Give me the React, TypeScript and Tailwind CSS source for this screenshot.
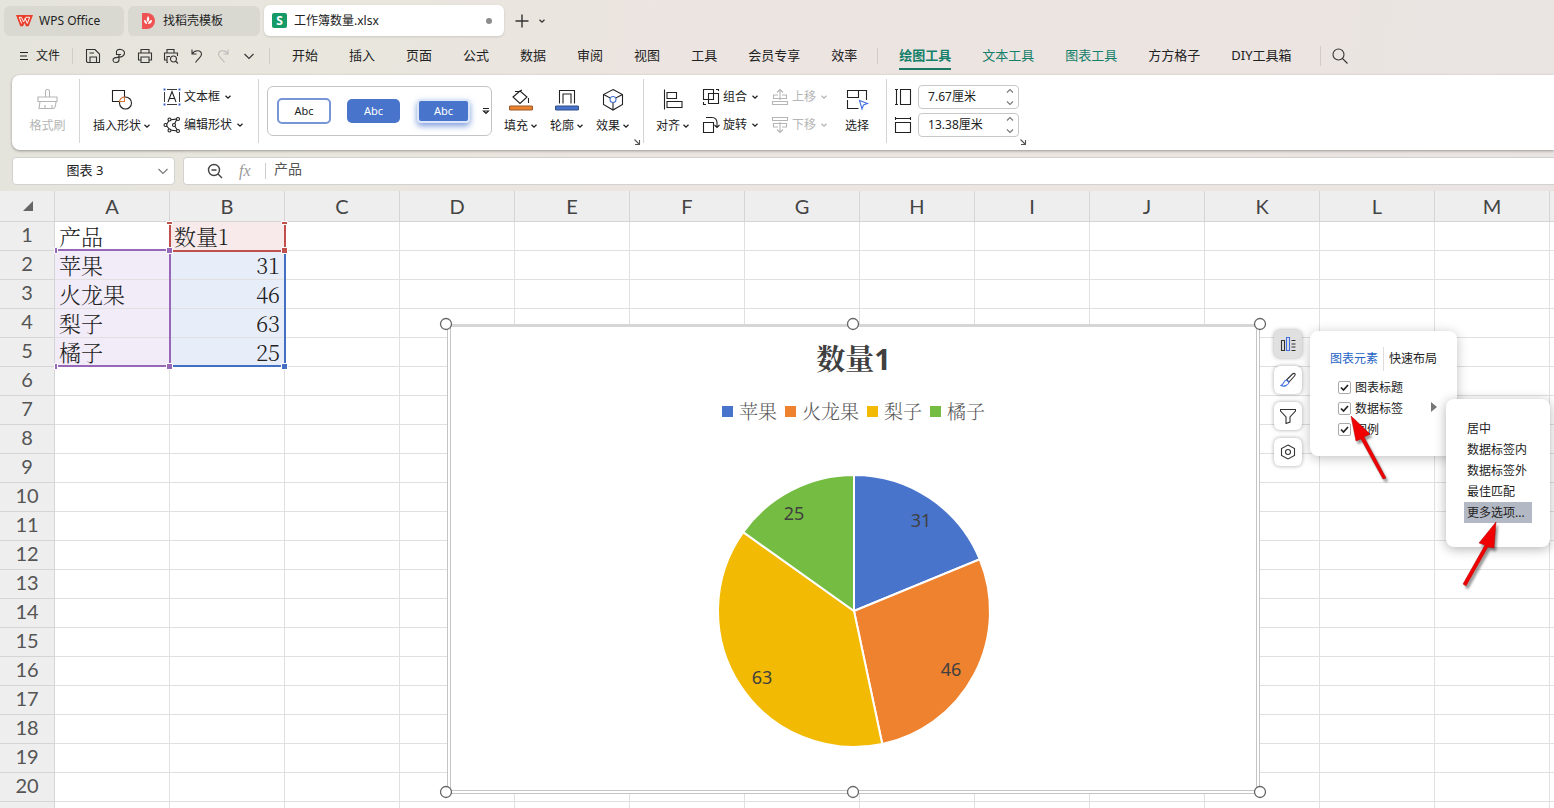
import React, { ReactNode } from "react";

const SANS = "font-['Noto_Sans','Noto_Sans_CJK_SC',sans-serif]";

const MENU_A = ["开始", "插入", "页面", "公式", "数据", "审阅", "视图", "工具", "会员专享", "效率"];
const MENU_B = ["绘图工具", "文本工具", "图表工具", "方方格子", "DIY工具箱"];
const COLS = ["A", "B", "C", "D", "E", "F", "G", "H", "I", "J", "K", "L", "M"];
const ROWS = Array.from({ length: 21 }, (_, i) => i + 1);
const DATA = [
  { name: "苹果", value: 31, color: "#4874cb", label: [67, -90] },
  { name: "火龙果", value: 46, color: "#ee822f", label: [97, 59] },
  { name: "梨子", value: 63, color: "#f2ba02", label: [-92, 67] },
  { name: "橘子", value: 25, color: "#75bd42", label: [-60, -97] },
];

type SvgProps = { className?: string; children: ReactNode; box?: string };
function Svg({ className = "size-5", children, box = "0 0 20 20" }: SvgProps) {
  return (
    <svg viewBox={box} className={`shrink-0 ${className}`} fill="none" stroke="currentColor" strokeWidth="1.1" aria-hidden="true">
      {children}
    </svg>
  );
}

function Chevron({ className = "w-2" }: { className?: string }) {
  return (
    <Svg className={className} box="0 0 8 8">
      <path d="M1.5 2.8 4 5.2 6.500 2.8" strokeWidth="1.3" />
    </Svg>
  );
}

function WideChevron({ className = "" }: { className?: string }) {
  return (
    <Svg className={`size-3 ${className}`} box="0 0 12 12">
      <path d="M1.500 4 6 8.500 10.500 4" />
    </Svg>
  );
}

function Launcher() {
  return (
    <button aria-label="更多设置" className="self-end text-[#555]">
      <Svg className="size-2" box="0 0 8 8">
        <path d="M1.500 1.500 6 6M6.500 2v4.500H2" />
      </Svg>
    </button>
  );
}

function TabBar() {
  return (
    <nav className="flex h-[37px] shrink-0 items-center gap-1 pt-1 pl-1 text-xs">
      <button className="flex h-[30px] w-[120px] items-center gap-1.5 rounded-md bg-[#d9d9d1] px-3 whitespace-nowrap">
        <svg viewBox="0 0 18 14" className="w-[17px]" aria-hidden="true">
          <path d="M0 1h18l-4.500 12h-3L9 9.500 7.500 13h-3z" fill="#e8402c" />
          <path d="M3.500 3.500h2.200l2.300 5L10.500 3.500h4L12 10 9.500 4.500M6 10 3.500 3.500" fill="none" stroke="#fff" strokeWidth="1" />
        </svg>
        WPS Office
      </button>
      <button className="flex h-[30px] w-[132px] items-center gap-2 rounded-md bg-[#d9d9d1] px-[13px]">
        <svg viewBox="0 0 14 16" className="h-4" aria-hidden="true">
          <path d="M1 0h5a8 8 0 0 1 0 16H1z" fill="#ee5253" />
          <path d="M7 3c2 2 1.500 5-.5 6C5 7 6 5 7 3zM3 7c2 0 3 2 3 4-2 0-3-2-3-4zm8 0c0 3-2 4-4 4 0-2 2-4 4-4z" fill="#fff" />
        </svg>
        找稻壳模板
      </button>
      <button className="flex h-[31px] w-60 items-center rounded-md bg-white px-2 shadow-sm">
        <span className="mr-[7px] flex size-[15px] items-center justify-center rounded-xs bg-[#159a68] font-bold text-white">S</span>
        工作簿数量.xlsx
        <span className="mr-1 ml-auto size-1.5 rounded-full bg-[#8c8c8c]" />
      </button>
      <button aria-label="新建" className="ml-1.5 text-[#333]">
        <Svg className="size-4" box="0 0 16 16"><path d="M8 1.500v13M1.500 8h13" strokeWidth="1.400" /></Svg>
      </button>
      <button aria-label="标签列表" className="ml-1 text-[#333]"><Chevron /></button>
    </nav>
  );
}

const QUICK: { label: string; icon: ReactNode; off?: boolean }[] = [
  { label: "保存", icon: <path d="M1.500 13.500v-12H10l4.500 4.500v8.500h-12l-1-1zM5 14.500V9h6.500v5.500M4.500 5h4.500" /> },
  { label: "输出", icon: <path d="M5.500 3c1.500-2.500 7.500-2 8 1.500.5 3.500-3.500 5-6.500 4.500M5.500 3v3.500h4.500M8 6.500V12c0 3-5.500 3.500-6 .5C1.500 10 5 9 8 9.500" /> },
  { label: "打印", icon: <path d="M4 5V1.500h8V5M4 12H1.500V5h13v7H12M4 9h8v5.500H4z" /> },
  { label: "打印预览", icon: <path d="M4 5V1.500h7V5M4 12H1.500V5h13v3M5 14.500H4V8.500h3M10.500 8a3 3 0 1 1 0 6 3 3 0 0 1 0-6zM12.500 13l2.500 2.500" /> },
  { label: "撤销", icon: <path d="M3 1.500V6h4.500M3 6c3-4.500 9-4 9.500 0 .3 3-3 4-6 8.500" /> },
  { label: "恢复", icon: <path d="M13 1.500V6H8.500M13 6c-3-4.500-9-4-9.500 0-.3 3 3 4 6 8.500" />, off: true },
];

function MenuBar() {
  return (
    <div className="flex h-[38px] shrink-0 items-center text-[13px] whitespace-nowrap">
      <button className="flex items-center gap-2 pl-5 text-xs">
        <Svg className="size-2" box="0 0 8 8"><path d="M0 .5h8M0 4h7M0 7.500h8" /></Svg>
        文件
      </button>
      <span className="ml-3 h-4 w-px bg-[#d0cdc8]" />
      <div className="flex items-center gap-2.5 pl-3">
        {QUICK.map((q) => (
          <button key={q.label} aria-label={q.label} className={q.off ? "text-[#bbb]" : "text-[#333]"}>
            <Svg className="size-4" box="0 0 16 16">{q.icon}</Svg>
          </button>
        ))}
        <button aria-label="自定义快速访问" className="pl-0.5 text-[#333]"><WideChevron /></button>
      </div>
      <span className="ml-3.5 h-4 w-px bg-[#d0cdc8]" />
      <div className="flex items-center gap-[31px] pl-[22px]">
        {MENU_A.map((m) => <button key={m}>{m}</button>)}
      </div>
      <span className="ml-5 h-4 w-px bg-[#d0cdc8]" />
      <div className="flex items-center gap-[31px] pl-[21px]">
        {MENU_B.map((m, i) => (
          <button key={m} className={i === 0 ? "border-b-2 border-[#1b7862] pt-1 pb-0.5 font-bold text-[#14806a]" : i < 3 ? "text-[#14806a]" : ""}>{m}</button>
        ))}
      </div>
      <span className="ml-7 h-5 w-px bg-[#d0cdc8]" />
      <button aria-label="搜索" className="ml-2.5 text-[#333]">
        <Svg className="size-[18px]" box="0 0 18 18"><circle cx="7.500" cy="7.500" r="5.500" /><path d="m11.500 11.500 5 5" /></Svg>
      </button>
    </div>
  );
}

function BigTool({ label, icon, menu, off }: { label: string; icon: ReactNode; menu?: boolean; off?: boolean }) {
  return (
    <button className={`flex shrink-0 flex-col items-center gap-1.5 ${off ? "text-[#b5b5b5]" : "text-[#222]"}`}>
      <Svg className="size-6" box="0 0 24 24">{icon}</Svg>
      <span className="flex items-center gap-0.5">{label}{menu && <Chevron />}</span>
    </button>
  );
}

function SmallTool({ label, icon, off, menu = true }: { label: string; icon: ReactNode; off?: boolean; menu?: boolean }) {
  return (
    <button className={`flex h-5 shrink-0 items-center gap-0.5 ${off ? "text-[#b5b5b5]" : "text-[#222]"}`}>
      <Svg className="size-[18px]" box="0 0 18 18">{icon}</Svg>
      <span className="mr-0.5 ml-px">{label}</span>
      {menu && <Chevron />}
    </button>
  );
}

function SizeField({ id, label, value, icon }: { id: string; label: string; value: string; icon: ReactNode }) {
  return (
    <div className="flex items-center gap-1.5">
      <label htmlFor={id} aria-label={label}><Svg className="size-[18px]" box="0 0 18 18">{icon}</Svg></label>
      <span className="flex h-6 w-[101px] items-center justify-between rounded border border-[#c8c8c8] pr-1">
        <input id={id} defaultValue={value} className="w-20 min-w-0 bg-transparent pl-[9px] outline-none" />
        <Svg className="h-[18px] w-2 text-[#777]" box="0 0 8 18"><path d="M1 4.500 4 1.500 7 4.500M1 13.500l3 3 3-3" /></Svg>
      </span>
    </div>
  );
}

function Rule() {
  return <span className="h-16 w-px shrink-0 bg-[#d4d4d4]" />;
}

function Ribbon() {
  return (
    <div className="ml-3 flex h-[75px] shrink-0 items-center overflow-hidden rounded-l-lg bg-white pb-[3px] text-xs whitespace-nowrap shadow-[0_1px_3px_rgba(0,0,0,0.35)]">
      <div className="flex w-[67px] shrink-0 justify-center pl-1">
        <BigTool off label="格式刷" icon={<path d="M3 9h19v4.500H3zM10.500 9V3.500a2 2 0 0 1 4 0V9M5 13.500 4 20.500h14.500q2 0 2.500-7M17 20.500V17M10 20.500V17" />} />
      </div>
      <Rule />
      <div className="flex w-[178px] shrink-0 items-center gap-3 pl-[13px]">
        <BigTool menu label="插入形状" icon={<><path d="M2.500 2.500h12v11h-12z" /><circle cx="15.500" cy="15" r="6" fill="#fff" /><path d="M14.500 9v4.500H9.500c.2-2.500 2.500-4.500 5-4.500z" stroke="#d9733a" fill="#fff" /></>} />
        <div className="flex flex-col gap-2">
          <SmallTool label="文本框" icon={<><path d="M1.500 4v10M16.500 4v10M4 1.500h10M4 16.500h10" strokeWidth="0.900" /><path d="m5 14 4-10.500L13 14M6.500 10.500h5" /><path d="M.5.5h2v2h-2zM15.500.5h2v2h-2zM.5 15.500h2v2h-2zM15.500 15.500h2v2h-2z" fill="#3c62c8" stroke="none" /></>} />
          <SmallTool label="编辑形状" icon={<><path d="M3 9 6.500 4l7.500-1-3 6 4 6-8-1z" /><g fill="#fff"><circle cx="2.500" cy="9" r="1.500" /><circle cx="6.500" cy="3.500" r="1.500" /><circle cx="15" cy="3" r="1.500" /><circle cx="11" cy="9" r="1.500" /><circle cx="15" cy="15" r="1.500" /><circle cx="6.500" cy="14.500" r="1.500" /></g></>} />
        </div>
      </div>
      <Rule />
      <div className="ml-2 flex h-[50px] w-[225px] shrink-0 items-center rounded-md border border-[#c4c4c4] pl-[9px] text-[11px]">
        <button className="h-[26px] w-[54px] rounded-[5px] border-2 border-[#7896d6]">Abc</button>
        <button className="ml-4 h-6 w-[53px] rounded-[5px] bg-[#4874cb] text-white">Abc</button>
        <button className="ml-[17px] h-6 w-[53px] rounded border-2 border-[#dce8fa] bg-[#4874cb] text-white shadow-[0_3px_6px_rgba(72,116,203,0.7)]">Abc</button>
        <button aria-label="更多样式" className="ml-3">
          <Svg className="size-2" box="0 0 8 8"><path d="M1 1.500h6M1.500 4 4 6.500 6.500 4z" /></Svg>
        </button>
      </div>
      <div className="ml-3 flex h-16 shrink-0 items-center gap-3">
        <BigTool menu label="填充" icon={<><path d="m4 9 7-6 7 6-7 6.500zM6 3.500h4L13 2M19.500 10v5" /><rect x=".5" y="18" width="23" height="4" rx="1" fill="#ee822f" stroke="#9a5a28" /></>} />
        <BigTool menu label="轮廓" icon={<><path d="M4.500 15.500V2.500h15v13M8 15.500V6h8v9.500" /><rect x=".5" y="18" width="23" height="4" rx="1" fill="#4874cb" stroke="#334f88" /></>} />
        <BigTool menu label="效果" icon={<><path d="m12 1.500 9.500 5v10L12 22l-9.500-5.500v-10zM2.500 6.500 12 11.500l9.500-5M12 12v10" /><circle cx="12" cy="11.500" r="3" fill="#fff" stroke="#4874cb" /></>} />
      </div>
      <div className="flex h-[70px] w-[13px] shrink-0 justify-center"><Launcher /></div>
      <Rule />
      <div className="flex shrink-0 items-center gap-3 pr-[17px] pl-3">
        <BigTool menu label="对齐" icon={<path d="M3.500 1.500v20M6 4.500h9.500v6H6zM6 13.500h15v6H6z" />} />
        <div className="flex flex-col gap-2">
          <SmallTool label="组合" icon={<path d="M1.500 1.500h10v10h-10zM6.500 5.500h10v10h-10zM14 1.500h2.500V3M1.500 14v2.500H4" />} />
          <SmallTool label="旋转" icon={<path d="M1.500 6.500h10v10h-10zM4 1.500h6c3 0 5 2 5 5V11M12.500 9l2.500 2.500L17.500 9" />} />
        </div>
        <div className="flex flex-col gap-2">
          <SmallTool off label="上移" icon={<path d="M1.500 13.500h15v3h-15zM7 7H2.500v3.500h13V7H11M9 12V1.500M6 4.500l3-3 3 3" />} />
          <SmallTool off label="下移" icon={<path d="M1.500 1.500h15v3h-15zM7 11H2.500V7.500h13V11H11M9 6v10.500M6 13.500l3 3 3-3" />} />
        </div>
        <div className="pl-[5px]">
          <BigTool label="选择" icon={<><path d="M2.500 2.500h11v7h-11zM13.500 9.500V2.500h8v7M2.500 12v8.500h11M21.500 9.500V12" /><path d="m14.500 12.500 8 3-4 1.500-1.500 4z" stroke="#3f6fe0" /></>} />
        </div>
      </div>
      <Rule />
      <div className="flex shrink-0 flex-col gap-1 pl-[7px]">
        <SizeField id="h" label="高度" value="7.67厘米" icon={<path d="M1 1.500h3M1 16.500h3M2.500 1.500v15M6.500 1.500h10v15h-10z" />} />
        <SizeField id="w" label="宽度" value="13.38厘米" icon={<path d="M1.500 1v3M16.500 1v3M1.500 2.500h15M1.500 6.500h15v10h-15z" />} />
      </div>
      <div className="flex h-[70px] shrink-0"><Launcher /></div>
    </div>
  );
}

function FormulaBar() {
  return (
    <div className="flex h-[41px] shrink-0 items-center gap-2 pl-3 text-[13px]">
      <label className="flex h-7 w-[163px] items-center rounded border border-[#d2d2d0] bg-white pr-[5px]">
        <input aria-label="名称框" defaultValue="图表 3" className="w-0 grow bg-transparent text-center outline-none" />
        <WideChevron className="text-[#777]" />
      </label>
      <div className="flex h-7 grow items-center rounded-l border border-r-0 border-[#d2d2d0] bg-white pl-[23px]">
        <Svg className="size-4 text-[#444]" box="0 0 16 16"><circle cx="7" cy="7" r="5.500" strokeWidth="1.400" /><path d="m11 11 4 4M4.500 7h5" strokeWidth="1.400" /></Svg>
        <em className="ml-4 w-[26px] font-['Liberation_Serif',serif] text-base text-[#999]">fx</em>
        <span className="h-4 w-px bg-[#ccc]" />
        <input aria-label="编辑栏" defaultValue="产品" className="grow bg-transparent pb-1 pl-2 text-sm text-[#555] outline-none" />
      </div>
    </div>
  );
}

function Grid() {
  return (
    <table className="w-full min-w-[1554px] table-fixed border-separate border-spacing-0">
      <thead>
        <tr className="h-[31px] bg-[#eeeeee] font-['Lato','Noto_Sans',sans-serif] text-xl text-[#444]">
          <th className="w-[55px] border-r border-b border-[#d5d5d5]" aria-label="全选">
            <svg viewBox="0 0 10 10" className="ml-[23px] size-2.5" aria-hidden="true"><path d="M10 0v10H0z" fill="#666" /></svg>
          </th>
          {COLS.map((c) => <th key={c} scope="col" className="w-[115px] border-r border-b border-[#d5d5d5] font-normal">{c}</th>)}
          <th aria-hidden="true" className="border-b border-[#d5d5d5]" />
        </tr>
      </thead>
      <tbody>
        {ROWS.map((r) => (
          <tr key={r} className="h-[29px]">
            <th scope="row" className="border-r border-b border-[#d5d5d5] bg-[#eeeeee] p-0 align-top font-['Lato','Noto_Sans',sans-serif] text-xl leading-6 font-normal text-[#555]">{r}</th>
            {COLS.map((c) => {
              const item = DATA[r - 2];
              const text = c === "A" ? (r === 1 ? "产品" : item?.name) : c === "B" ? (r === 1 ? "数量1" : item?.value) : "";
              const fill = c === "A" && item ? "bg-[#f2ecf8]" : c === "B" && r === 1 ? "bg-[#f8eaea]" : c === "B" && item ? "bg-[#e8edfa] text-right" : "";
              return (
                <td key={c} className={`border-r border-b border-[#e0e0e0] px-1 py-0 font-['Noto_Serif_CJK_SC','Noto_Sans_CJK_SC',serif] text-[22px] leading-7 font-light ${fill}`}>{text}</td>
              );
            })}
            <td className="border-b border-[#e0e0e0] p-0" />
          </tr>
        ))}
      </tbody>
    </table>
  );
}

function RangeOutlines() {
  return (
    <svg className="absolute top-0 left-0 h-[180px] w-[300px]" fill="none" strokeWidth="2" aria-hidden="true">
      <path d="M55 59H169M55 175H169M170 61V174" stroke="#9768b8" />
      <path d="M170 175H285M285 61V176" stroke="#4470c4" />
      <path d="M170 33V58M285 33V58M170 60H285" stroke="#bf504d" />
      <g stroke="#fff" strokeWidth="1">
        <path d="M166.500 56.500h6v6h-6zM166.500 172.500h6v6h-6zM54.500 172.500h3v6h-3zM54.500 56.500h3v6h-3z" fill="#9768b8" />
        <path d="M281.500 56.500h6v6h-6zM281.500 30.500h6v3h-6zM166.500 30.500h6v3h-6z" fill="#bf504d" />
        <path d="M281.500 172.500h6v6h-6z" fill="#4470c4" />
      </g>
    </svg>
  );
}

const R = 136;
const TOTAL = DATA.reduce((s, d) => s + d.value, 0);
function point(share: number) {
  const a = share * 2 * Math.PI;
  return [153 + R * Math.sin(a), 153 - R * Math.cos(a)];
}

function Pie() {
  let sum = 0;
  return (
    <svg viewBox="0 0 306 306" className="size-[306px]" role="img" aria-label="数量1">
      {DATA.map((d) => {
        const [x1, y1] = point(sum / TOTAL);
        sum += d.value;
        const [x2, y2] = point(sum / TOTAL);
        return (
          <g key={d.name}>
            <path d={`M153 153L${x1} ${y1}A${R} ${R} 0 0 1 ${x2} ${y2}z`} fill={d.color} stroke="#fff" strokeWidth="2" />
            <text x={153 + d.label[0]} y={159 + d.label[1]} textAnchor="middle" fontSize="18" fill="#404040">{d.value}</text>
          </g>
        );
      })}
    </svg>
  );
}

function Chart() {
  return (
    <figure className="absolute top-[133px] left-[447px] flex h-[470px] w-[813px] flex-col items-center border-4 border-double border-[#c4c4c4] bg-white [border-top-color:#d6d6d6] [border-top-style:solid] border-t-[3px]">
      <svg className="absolute -top-3 -left-3 h-[486px] w-[829px] overflow-visible" fill="#fff" stroke="#666" strokeWidth="1.300" aria-hidden="true">
        {[7, 414, 821].map((x) => [9, 477].map((y) => <circle key={`${x}-${y}`} cx={x} cy={y} r="5.500" />))}
      </svg>
      <figcaption className="mt-3 font-['Noto_Sans','Noto_Serif_CJK_SC','Noto_Sans_CJK_SC',sans-serif] text-[29px] leading-10 font-bold text-[#404040]">数量1</figcaption>
      <ul className="mt-5 flex gap-2 font-['Noto_Serif_CJK_SC','Noto_Sans_CJK_SC',serif] text-[19px] leading-6 font-light text-[#595959]">
        {DATA.map((d) => (
          <li key={d.name} className="flex items-center gap-1.5">
            <span className="size-[11px]" style={{ backgroundColor: d.color }} />
            {d.name}
          </li>
        ))}
      </ul>
      <div className="mt-[35px]"><Pie /></div>
    </figure>
  );
}

const SIDE: { label: string; icon: ReactNode }[] = [
  { label: "图表元素", icon: <><path d="M1.500 4.500h3v10h-3zM11.500 4.500h4M11.500 8h4M11.500 11h4M11.500 14.500h4" /><path d="M6.500 1.500h3v13h-3z" stroke="#3f6fe0" /></> },
  { label: "图表样式", icon: <><path d="M6.500 8 12.500 2c2-1.500 3.500 0 2 2L9 10z" /><path d="M6.500 8c-3 0-2 4-5.500 5.500 3 1.500 7.500 0 8-3.500z" stroke="#3f6fe0" /></> },
  { label: "筛选", icon: <path d="M.5 1.500h15v1.500L10 9v5l-4 1.500V9L.5 3z" /> },
  { label: "设置", icon: <><path d="m8 1 6.500 3.500v7L8 15l-6.500-3.500v-7z" /><circle cx="8" cy="8" r="2.500" /></> },
];

function SideButtons() {
  return (
    <div className="absolute top-[139px] left-[1274px] flex flex-col gap-2">
      {SIDE.map((s, i) => (
        <button key={s.label} aria-label={s.label} className={`flex size-7 items-center justify-center rounded-md text-[#333] shadow-[0_0_4px_rgba(0,0,0,0.35)] ${i === 0 ? "bg-[#e0e0e0]" : "bg-white"}`}>
          <Svg className="size-4" box="0 0 16 16">{s.icon}</Svg>
        </button>
      ))}
    </div>
  );
}

function ElementsPanel() {
  return (
    <section className="absolute top-[140px] left-[1310px] h-[125px] w-[147px] rounded-lg bg-white pt-4 text-xs shadow-[0_2px_12px_rgba(0,0,0,0.25)]">
      <div className="flex h-6 items-center justify-center gap-[5px] whitespace-nowrap">
        <button className="text-[#2563c4]">图表元素</button>
        <span className="h-6 w-px bg-[#ddd]" />
        <button>快速布局</button>
      </div>
      <div className="mt-1.5 flex flex-col pl-7">
        {["图表标题", "数据标签", "图例"].map((t, i) => (
          <label key={t} className="flex h-[21px] items-center gap-1">
            <span className="grid size-[13px] shrink-0">
              <input type="checkbox" defaultChecked className="col-start-1 row-start-1 size-[13px] appearance-none rounded-xs border border-[#aaa] bg-white" />
              <Svg className="pointer-events-none col-start-1 row-start-1 size-[13px]" box="0 0 13 13"><path d="m3 6.500 2.500 2.500L10 4" strokeWidth="1.700" /></Svg>
            </span>
            {t}
            {i === 1 && <svg viewBox="0 0 6 10" className="mr-5 mb-1 ml-auto w-1.5" aria-hidden="true"><path d="M0 0v10l6-5z" fill="#777" /></svg>}
          </label>
        ))}
      </div>
    </section>
  );
}

function LabelMenu() {
  return (
    <div role="menu" className="absolute top-[208px] left-[1446px] flex h-[148px] w-[104px] flex-col items-start rounded-lg bg-white pt-[19px] pl-[18px] text-xs shadow-[0_2px_12px_rgba(0,0,0,0.3)]">
      {["居中", "数据标签内", "数据标签外", "最佳匹配", "更多选项..."].map((t, i) => (
        <button key={t} role="menuitem" className={`h-[21px] px-[3px] whitespace-nowrap ${i === 4 ? "w-[68px] bg-[#b3b9c4] text-left" : ""}`}>{t}</button>
      ))}
    </div>
  );
}

function Arrows() {
  return (
    <svg className="pointer-events-none absolute top-[219px] left-[1340px] h-[185px] w-[180px] drop-shadow-[2px_3px_1px_rgba(0,0,0,0.4)]" fill="#f00000" stroke="#b00000" strokeWidth="0.5" aria-hidden="true">
      <path d="M11 6 16 31 21 29 43 69 46 68 24 27 30 24z" />
      <path d="M156 112 139 133 145 135 123 174 126 176 148 137 154 138z" />
    </svg>
  );
}

export default function App() {
  return (
    <div className={`flex h-screen flex-col overflow-hidden bg-[linear-gradient(100deg,#e5e4dc_0%,#e8e6dd_20%,#ece4e1_42%,#ebe4e1_75%,#e9e5e3_100%)] text-[#222] ${SANS}`}>
      <TabBar />
      <MenuBar />
      <Ribbon />
      <FormulaBar />
      <main className="relative grow overflow-hidden bg-white">
        <Grid />
        <RangeOutlines />
        <Chart />
        <SideButtons />
        <ElementsPanel />
        <LabelMenu />
        <Arrows />
      </main>
    </div>
  );
}
